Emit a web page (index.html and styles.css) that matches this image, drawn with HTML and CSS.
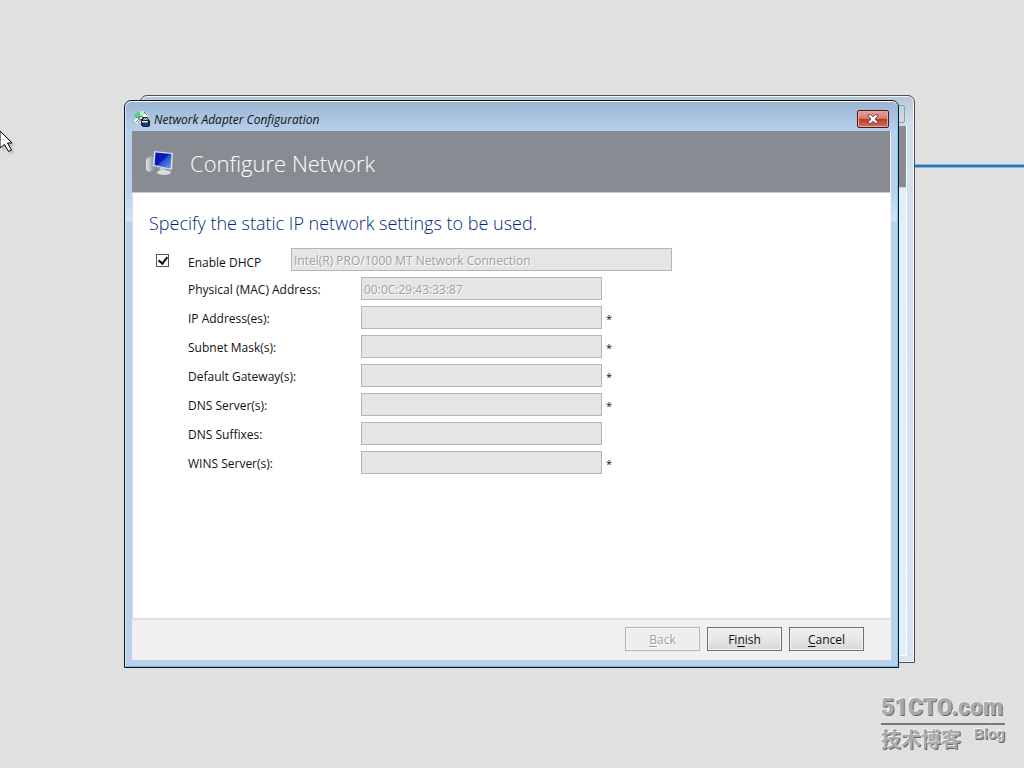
FILE: index.html
```html
<!DOCTYPE html>
<html lang="en">
<head>
<meta charset="utf-8">
<title>Network Adapter Configuration</title>
<link rel="stylesheet" href="styles.css">
</head>
<body>
<div class="desktop">
  <div class="rule"></div>
  <div class="window window-back">
    <div class="ghost-caption"><span class="ghost-close"></span></div>
    <div class="ghost-banner"></div>
    <div class="ghost-body"></div>
  </div>
  <main class="window window-front">
    <header class="titlebar">
      <svg class="title-icon" viewBox="0 0 16 16" aria-hidden="true">
        <circle cx="7" cy="6.500" r="6" fill="#dfe9ec"/>
        <path d="M7 7 0 5 2 2l4-2z" fill="#55cf86"/>
        <path d="M7 7 6 0l4 0 1 3z" fill="#b9f0bd"/>
        <path d="M7 7 0 9l3 4zM7 7l7-2-1-3z" fill="#fff"/>
        <path d="M1 6l5 1-4 4M4 12l3-4M10 1l3 3" fill="none" stroke="#66757c"/>
        <circle cx="7" cy="7" r="1.800" fill="#f2f4f4" stroke="#51636e"/>
        <path d="M7 9l2-3h4l3 4v5l-2 1H9l-2-2z" fill="#15202c"/>
        <path d="M10 7h3l1 2H9z" fill="#8fb8a6"/>
        <path d="M8 10h6v1.500H8z" fill="#eaf8fc"/>
        <path d="M9 12h5v3H9z" fill="#083fb2"/>
      </svg>
      <span class="title">Network Adapter Configuration</span>
      <button class="close" type="button" aria-label="Close">
        <svg viewBox="0 0 12 10" aria-hidden="true"><path d="M1 .8h3l2 2 2-2h3v1L8 5l3 3.200v1H8l-2-2-2 2H1v-1L4 5 1 1.800z" fill="#fff" stroke="#573f49" stroke-width=".9"/></svg>
      </button>
    </header>
    <section class="content">
      <div class="banner">
        <svg class="computer" viewBox="0 0 28 26" aria-hidden="true">
          <defs>
            <linearGradient id="screen" x1="0" y1="0" x2="1" y2="1"><stop offset="0" stop-color="#0714a0"/><stop offset=".48" stop-color="#0620bd"/><stop offset=".52" stop-color="#2a50d0"/><stop offset="1" stop-color="#6f9cf0"/></linearGradient>
            <linearGradient id="metal"><stop offset="0" stop-color="#e6e6e3"/><stop offset="1" stop-color="#84888d"/></linearGradient>
          </defs>
          <path d="M1 9 6 6l4 2v12l-6 2-3-2z" fill="url(#metal)"/>
          <path d="M1 9l3 1v12" fill="none" stroke="#c3c6c9"/>
          <path d="M15 18h5l1 4h-7z" fill="#c3c6cb"/>
          <ellipse cx="19" cy="22.500" rx="7" ry="2.500" fill="#d9dada"/>
          <path d="M9 1l19 2-1 17L8 16z" fill="#d5e0f4"/>
          <path d="M10.500 2.500l16 1.500-1 14.500L9.500 15z" fill="url(#screen)"/>
        </svg>
        <h1>Configure Network</h1>
      </div>
      <form class="page">
        <h2>Specify the static IP network settings to be used.</h2>
        <div class="adapter">
          <input id="dhcp" class="check" type="checkbox" checked>
          <label for="dhcp">Enable DHCP</label>
          <input class="field" type="text" aria-label="Network adapter" value="Intel(R) PRO/1000 MT Network Connection" disabled>
        </div>
        <div class="row"><label for="mac">Physical (MAC) Address:</label><input id="mac" class="field" type="text" value="00:0C:29:43:33:87" disabled></div>
        <div class="row"><label for="ip">IP Address(es):</label><input id="ip" class="field" type="text" disabled><span>*</span></div>
        <div class="row"><label for="mask">Subnet Mask(s):</label><input id="mask" class="field" type="text" disabled><span>*</span></div>
        <div class="row"><label for="gateway">Default Gateway(s):</label><input id="gateway" class="field" type="text" disabled><span>*</span></div>
        <div class="row"><label for="dns">DNS Server(s):</label><input id="dns" class="field" type="text" disabled><span>*</span></div>
        <div class="row"><label for="suffix">DNS Suffixes:</label><input id="suffix" class="field" type="text" disabled></div>
        <div class="row"><label for="wins">WINS Server(s):</label><input id="wins" class="field" type="text" disabled><span>*</span></div>
      </form>
      <footer class="actions">
        <button type="button" disabled><u>B</u>ack</button>
        <button type="button">Fi<u>n</u>ish</button>
        <button type="button"><u>C</u>ancel</button>
      </footer>
    </section>
  </main>
  <svg class="cursor" viewBox="0 0 16 24" aria-hidden="true"><path d="M0 1l12 12H7.500l4 7-3 1.500-4-7L0 18z" fill="#fff" stroke="#000"/></svg>
  <div class="watermark">
    <div class="brand">51CTO.com</div>
    <div class="subbrand"><span class="cn" lang="zh">技术博客</span><span class="blog">Blog</span></div>
  </div>
</div>
</body>
</html>
```
FILE: styles.css
```css
* { box-sizing: border-box; }
body { margin: 0; background: #e0e0e0; color: #111; font: 400 12px/16px "Open Sans", "Noto Sans", sans-serif; }
.desktop { position: relative; min-height: 100vh; overflow: hidden; }
.rule { position: absolute; top: 164px; left: 914px; right: 0; height: 4px; background: #2475b4; border-top: 1px solid #82b9df; border-bottom: 1px solid #82b9df; }
.window { position: absolute; width: 775px; height: 568px; display: flex; flex-direction: column; border: 1px solid #101519; border-radius: 7px 7px 0 0; }
.window-back { left: 140px; top: 95px; padding: 0 7px 6px; border-color: #4b4e52; background: linear-gradient(#b9c7d4, #d3dfec 30px, #d9e5f1); box-shadow: inset 0 0 0 1px #edf4fa; }
.ghost-caption { height: 30px; display: flex; justify-content: flex-end; align-items: center; padding: 6px 2px 0 0; }
.ghost-close { width: 32px; height: 18px; border: 1px solid #8d9caf; border-radius: 2px; }
.ghost-banner { height: 62px; background: #888b91; border-right: 1px solid #fff; border-bottom: 1px solid #ccd4da; }
.ghost-body { flex: 1; background: #e1effa; border-right: 1px solid #fff; border-bottom: 1px solid #fff; }
.window-front { left: 124px; top: 100px; padding: 0 7px 7px; background: linear-gradient(#9ab4d1, #b8d0eb 30px, #b9d1ea 90px, #d5e4f3 120px, #b9d1ea 121px); box-shadow: inset 0 1px #fff, inset 1px 0 #d6e7f5, inset -1px 0 #75cfe8, inset 0 -1px #70b7c9; }
.titlebar { flex: none; height: 30px; display: flex; align-items: center; gap: 4px; padding: 6px 2px 0; }
.title-icon { width: 16px; height: 16px; }
.title { flex: 1; padding-top: 2px; font-size: 12px; font-style: italic; }
.close { width: 32px; height: 18px; padding: 0; display: flex; align-items: center; justify-content: center; border: 1px solid #4f1920; border-radius: 2px; background: linear-gradient(#e6a298, #d87d70 46%, #b93b25 50%, #d17055); box-shadow: inset 0 0 0 1px #e7aaa1; }
.close svg { width: 12px; height: 10px; }
.content { flex: 1; display: flex; flex-direction: column; background: #fff; border-right: 1px solid #eef3f8; border-left: 1px solid #d7dbe1; }
.banner { height: 62px; display: flex; align-items: center; gap: 17px; padding: 2px 13px 0; margin-left: -1px; background: #888b91; border-bottom: 1px solid #c7c9cd; }
.computer { width: 28px; height: 26px; }
h1 { margin: 0; color: #fff; font-size: 22px; line-height: 30px; font-weight: 300; }
.page { flex: 1; padding: 17px 16px 0; }
h2 { margin: 0 0 12px; color: #002a78; font-size: 18px; line-height: 26px; font-weight: 300; }
.adapter, .row { display: flex; align-items: center; height: 23px; margin-bottom: 6px; }
.adapter { padding-left: 7px; }
.adapter label { width: 103px; margin-left: 19px; padding-top: 6px; }
.check { appearance: none; width: 13px; height: 13px; margin: 2px 0 0; border: 1px solid #555; background: #fff; }
.check:checked::before { content: ""; display: block; width: 4px; height: 7px; margin: 0 0 0 3px; border: solid #111; border-width: 0 2px 2px 0; transform: rotate(38deg); }
.row { padding-left: 39px; }
.row label { width: 173px; padding-top: 2px; }
.row span { padding: 3px 0 0 4px; font-size: 11px; }
.field { width: 241px; height: 23px; padding: 2px 2px 0; border: 1px solid #b5b5b5; border-radius: 0; background: #e5e5e5; color: #a0a0a0; font: inherit; text-shadow: 1px 1px #fff; }
.adapter .field { width: 381px; }
.actions { height: 42px; display: flex; justify-content: flex-end; align-items: flex-start; gap: 7px; padding: 7px 26px 0; margin-left: -1px; background: #f0f0f0; border-top: 2px solid #dfdfdf; }
.actions button { width: 75px; height: 24px; padding: 2px 0 0; border: 1px solid #707070; background: linear-gradient(#f0f0f0, #e7e7e7 50%, #d7d7d7); box-shadow: inset 0 0 0 1px #f5f5f5; color: #111; font: inherit; }
.actions button:disabled { border-color: #b5b5b5; background: #eee; color: #a0a0a0; text-shadow: 1px 1px #fff; }
u { text-underline-offset: 2px; }
.cursor { position: absolute; left: 0; top: 130px; width: 16px; height: 24px; filter: drop-shadow(2px 2px 1px #9999); }
.watermark { position: absolute; right: 19px; bottom: 15px; width: 124px; color: #aaa; text-shadow: -1px -1px #f3f3f3, 1px 1px #666; }
.brand { border-bottom: 2px solid #777; font: 900 23px/30px Roboto, sans-serif; }
.subbrand { display: flex; justify-content: space-between; }
.cn { font: 700 20px/28px "Noto Sans CJK SC", sans-serif; }
.blog { font: 700 14px/18px "Liberation Sans", sans-serif; }
```
